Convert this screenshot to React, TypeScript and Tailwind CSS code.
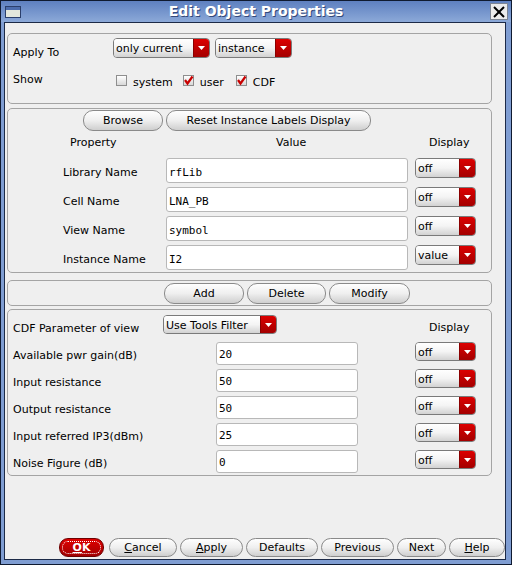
import React from "react";

function DropDown({ label, className }: { label: string; className: string }) {
  return (
    <div className={"flex rounded-[4px] border border-[#7a7a7a] overflow-hidden " + className}>
      <div className="flex-1 flex items-center pl-[2px] pt-px bg-linear-to-b from-white via-[#f4f4f4] to-[#d2d2d2] text-[11px] leading-[13px] whitespace-nowrap overflow-hidden">
        {label}
      </div>
      <div className="w-[16px] flex items-center justify-center bg-linear-to-b from-[#dc0000] to-[#a40000] border-l border-[#8a0000]">
        <svg width="7" height="4" viewBox="0 0 7 4">
          <polygon points="0,0 7,0 3.5,4" fill="white" />
        </svg>
      </div>
    </div>
  );
}

function Pill({ children, className }: { children: React.ReactNode; className: string }) {
  return (
    <div
      className={
        "flex items-center justify-center rounded-[10px] border border-[#8a8a8a] bg-linear-to-b from-[#fefefe] via-[#efefef] to-[#cfcfcf] text-[11px] leading-[13px] text-black whitespace-nowrap " +
        className
      }
    >
      {children}
    </div>
  );
}

function Check({ checked }: { checked: boolean }) {
  return (
    <div className="relative w-[11px] h-[11px] border border-[#8e8e8e] bg-linear-to-b from-white to-[#d8d8d8]">
      {checked && (
        <svg width="11" height="11" viewBox="0 0 11 11" className="absolute left-[-1px] top-[-1px]">
          <polyline points="2,5 4.5,8.5 9.5,1.5" fill="none" stroke="#c80000" strokeWidth="2.2" />
        </svg>
      )}
    </div>
  );
}

function Field({ value, className }: { value: string; className: string }) {
  return (
    <div
      className={
        "bg-white border border-[#b8b8b8] rounded-[3px] pl-[2px] font-['DejaVu_Sans_Mono',monospace] text-[11px] leading-[13px] " +
        className
      }
    >
      {value}
    </div>
  );
}

export default function App() {
  const instRows = [
    ["Library Name", "rfLib", "off"],
    ["Cell Name", "LNA_PB", "off"],
    ["View Name", "symbol", "off"],
    ["Instance Name", "I2", "value"],
  ];
  const cdfRows = [
    ["Available pwr gain(dB)", "20"],
    ["Input resistance", "50"],
    ["Output resistance", "50"],
    ["Input referred IP3(dBm)", "25"],
    ["Noise Figure (dB)", "0"],
  ];
  return (
    <div className="w-[512px] h-[565px] bg-[#0f1a30] p-px flex flex-col font-['DejaVu_Sans',sans-serif] text-[11px] leading-[13px] text-black">
      {/* Title bar */}
      <div className="h-[21px] grid grid-cols-[1fr_auto_1fr] items-center bg-linear-to-b from-[#5e80c0] to-[#8ca9d8]">
        <div className="pl-[4px] pt-[1px]">
          <div className="w-[16px] h-[12px] border border-[#2b3f6b] bg-[#e4e8dc] flex flex-col">
            <div className="h-[3px] bg-[#4d6dad]" />
          </div>
        </div>
        <div className="text-white font-bold text-[14px] leading-[17px] [text-shadow:1px_1px_0_#34497a]">
          Edit Object Properties
        </div>
        <div className="flex justify-end pr-[3px]">
          <div className="w-[18px] h-[17px] border border-[#7d8594] bg-[#ececec] flex items-center justify-center">
            <svg width="12" height="12" viewBox="0 0 12 12">
              <line x1="1" y1="1" x2="11" y2="11" stroke="black" strokeWidth="2" />
              <line x1="11" y1="1" x2="1" y2="11" stroke="black" strokeWidth="2" />
            </svg>
          </div>
        </div>
      </div>

      {/* Frame */}
      <div className="flex-1 flex bg-[#7f9dd2] pl-[3px] pr-[5px] pb-[4px]">
        <div className="flex-1 flex flex-col border border-[#1c2a47] bg-[#efefef]">
          {/* Section 1 */}
          <div className="mt-[10px] ml-[2px] w-[485px] h-[71px] border border-[#a4a4a4] rounded-[5px] flex flex-col">
            <div className="mt-[4px] flex items-start h-[20px]">
              <div className="w-[105px] pl-[5px] pt-[8px]">Apply To</div>
              <DropDown label="only current" className="w-[97px] h-[20px]" />
              <DropDown label="instance" className="ml-[5px] w-[77px] h-[20px]" />
            </div>
            <div className="mt-[14px] flex items-start">
              <div className="w-[105px] pl-[5px] pt-[1px]">Show</div>
              <div className="ml-[3px] flex items-start">
                <div className="mt-[3px]">
                  <Check checked={false} />
                </div>
                <div className="ml-[6px] mt-[4px]">system</div>
                <div className="ml-[10px] mt-[3px]">
                  <Check checked={true} />
                </div>
                <div className="ml-[6px] mt-[4px]">user</div>
                <div className="ml-[12px] mt-[3px]">
                  <Check checked={true} />
                </div>
                <div className="ml-[6px] mt-[4px]">CDF</div>
              </div>
            </div>
          </div>

          {/* Section 2 */}
          <div className="mt-[4px] ml-[2px] w-[485px] h-[165px] border border-[#a4a4a4] rounded-[5px] flex flex-col">
            <div className="mt-[1px] ml-[75px] flex gap-[3px]">
              <Pill className="w-[80px] h-[21px]">Browse</Pill>
              <Pill className="w-[205px] h-[21px]">Reset Instance Labels Display</Pill>
            </div>
            <div className="mt-[5px] h-[13px] flex">
              <div className="w-[158px] pl-[62px]">Property</div>
              <div className="w-[249px] pl-[110px]">Value</div>
              <div className="pl-[14px]">Display</div>
            </div>
            <div className="mt-[9px] flex flex-col gap-[4px]">
              {instRows.map(([l, v, d]) => (
                <div key={l} className="flex items-start h-[25px]">
                  <div className="w-[158px] pl-[55px] pt-[8px]">{l}</div>
                  <Field value={v} className="w-[242px] h-[25px] pt-[7px]" />
                  <DropDown label={d} className="ml-[7px] w-[61px] h-[20px]" />
                </div>
              ))}
            </div>
          </div>

          {/* Section 3 */}
          <div className="mt-[7px] ml-[2px] w-[485px] h-[26px] border border-[#a4a4a4] rounded-[5px] flex">
            <div className="mt-[2px] ml-[156px] flex gap-[3px]">
              <Pill className="w-[80px] h-[21px]">Add</Pill>
              <Pill className="w-[79px] h-[21px]">Delete</Pill>
              <Pill className="w-[81px] h-[21px]">Modify</Pill>
            </div>
          </div>

          {/* Section 4 */}
          <div className="mt-[3px] ml-[2px] w-[485px] h-[167px] border border-[#a4a4a4] rounded-[5px] flex flex-col">
            <div className="mt-[5px] flex items-start h-[19px]">
              <div className="w-[155px] pl-[5px] pt-[7px]">CDF Parameter of view</div>
              <DropDown label="Use Tools Filter" className="w-[114px] h-[19px]" />
              <div className="ml-[152px] pt-[6px]">Display</div>
            </div>
            <div className="mt-[8px] flex flex-col gap-[4px]">
              {cdfRows.map(([l, v]) => (
                <div key={l} className="flex items-start h-[23px]">
                  <div className="w-[208px] pl-[5px] pt-[7px]">{l}</div>
                  <Field value={v} className="w-[142px] h-[23px] pt-[5px]" />
                  <DropDown label="off" className="ml-[57px] w-[61px] h-[19px]" />
                </div>
              ))}
            </div>
          </div>

          <div className="flex-1" />

          {/* Bottom buttons */}
          <div className="mb-[2px] h-[19px] flex justify-end gap-[3px]">
            <div className="mr-[2px] w-[45px] h-[19px] rounded-[9px] border border-[#6e0000] bg-linear-to-b from-[#e00000] to-[#a20000] p-[2px]">
              <div className="w-full h-full border border-dotted border-white rounded-[6px] flex items-center justify-center text-white font-bold text-[11px] leading-[13px]">
                <span className="underline">O</span>K
              </div>
            </div>
            <Pill className="w-[68px] h-[19px] rounded-[9px]">
              <span className="underline">C</span>ancel
            </Pill>
            <Pill className="w-[63px] h-[19px] rounded-[9px]">
              <span className="underline">A</span>pply
            </Pill>
            <Pill className="w-[72px] h-[19px] rounded-[9px]">Defaults</Pill>
            <Pill className="w-[73px] h-[19px] rounded-[9px]">Previous</Pill>
            <Pill className="w-[49px] h-[19px] rounded-[9px]">Next</Pill>
            <Pill className="w-[56px] h-[19px] rounded-[9px]">
              <span className="underline">H</span>elp
            </Pill>
          </div>
        </div>
      </div>
    </div>
  );
}
